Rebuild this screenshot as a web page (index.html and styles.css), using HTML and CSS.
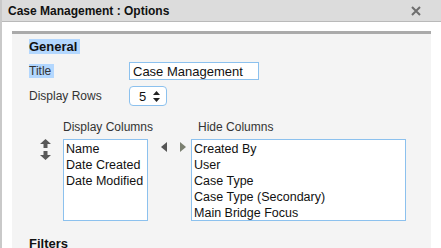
FILE: index.html
```html
<!DOCTYPE html>
<html lang="en">
<head>
    <meta charset="UTF-8">
    <title>Case Management : Options</title>
    <link rel="stylesheet" href="styles.css">
</head>
<body>
    <div class="dialog">
        <div class="titlebar">
            <span class="title">Case Management : Options</span>
            <svg class="close" width="10" height="10" viewBox="0 0 10 10"><path d="M1 1 L9 9 M9 1 L1 9" stroke="#6e6e6e" stroke-width="2"/></svg>
        </div>
        <div class="body">
            <div class="panel">
                <h2 class="section"><span class="sel">General</span></h2>

                <div class="row">
                    <label class="lbl"><span class="sel">Title</span></label>
                    <input class="text" type="text" value="Case Management">
                </div>
                <div class="row">
                    <label class="lbl">Display Rows</label>
                    <div class="spin">
                        <span>5</span>
                        <svg width="7" height="11" viewBox="0 0 7 11"><path d="M3.5 0 L7 4 L0 4 Z M0 7 L7 7 L3.5 11 Z" fill="#222"/></svg>
                    </div>
                </div>

                <div class="columns">
                    <div class="movers">
                        <svg width="11" height="9" viewBox="0 0 11 9"><path d="M5.5 0 L11 5 L7.5 5 L7.5 9 L3.5 9 L3.5 5 L0 5 Z" fill="#585858"/></svg>
                        <svg width="11" height="9" viewBox="0 0 11 9"><path d="M3.5 0 L7.5 0 L7.5 4 L11 4 L5.5 9 L0 4 L3.5 4 Z" fill="#585858"/></svg>
                    </div>
                    <div class="col">
                        <div class="col-label">Display Columns</div>
                        <div class="list list-show">
                            <div>Name</div>
                            <div>Date Created</div>
                            <div>Date Modified</div>
                        </div>
                    </div>
                    <div class="swap">
                        <svg width="6" height="10" viewBox="0 0 6 10"><path d="M6 0 L6 10 L0 5 Z" fill="#555"/></svg>
                        <svg width="6" height="10" viewBox="0 0 6 10"><path d="M0 0 L0 10 L6 5 Z" fill="#7a7f70"/></svg>
                    </div>
                    <div class="col">
                        <div class="col-label hide-label">Hide Columns</div>
                        <div class="list list-hide">
                            <div>Created By</div>
                            <div>User</div>
                            <div>Case Type</div>
                            <div>Case Type (Secondary)</div>
                            <div>Main Bridge Focus</div>
                        </div>
                    </div>
                </div>

                <h2 class="section filters">Filters</h2>
            </div>
        </div>
    </div>
</body>
</html>
```

FILE: styles.css
```css
body {
    margin: 0;
    font-family: "Liberation Sans", Arial, sans-serif;
    font-size: 12px;
    color: #222;
    background: #fff;
    overflow: hidden;
}
.dialog {
    border-left: 2px solid #c9c9c9;
    height: 248px;
    overflow: hidden;
}
.titlebar {
    display: flex;
    justify-content: space-between;
    align-items: center;
    height: 21px;
    padding: 0 20px 0 6px;
    background: #dcdcdc;
    border-bottom: 1px solid #b9b9b9;
}
.title {
    font-weight: bold;
    font-size: 12px;
    color: #111;
}
.body {
    padding: 9px 0 0 10px;
}
.panel {
    width: 419px;
    height: 220px;
    border-top: 3px solid #aaa;
    background: #f4f4f4;
    padding: 4px 0 0 17px;
    box-sizing: border-box;
}
.section {
    margin: 0 0 7px;
    font-size: 13px;
    font-weight: bold;
    color: #111;
    line-height: 17px;
}
.sel {
    background: #b3d7fe;
    padding-right: 3px;
}
.row {
    display: flex;
    align-items: center;
    margin-bottom: 6px;
}
.lbl {
    width: 100px;
    color: #333;
}
.text {
    width: 130px;
    height: 18px;
    box-sizing: border-box;
    border: 1px solid #8cc1ee;
    font-family: inherit;
    font-size: 13px;
    padding: 0 3px;
    margin: 0;
    color: #111;
}
.spin {
    display: flex;
    align-items: center;
    justify-content: space-between;
    width: 38px;
    height: 20px;
    box-sizing: border-box;
    border: 1px solid #8cc1ee;
    border-radius: 4px;
    background: #fff;
    padding: 0 6px 0 9px;
    font-size: 13px;
    color: #111;
}
.columns {
    display: flex;
    align-items: flex-start;
    margin-top: 14px;
}
.movers {
    display: flex;
    flex-direction: column;
    gap: 3px;
    margin: 19px 12px 0 11px;
}
.movers svg {
    display: block;
}
.swap {
    display: flex;
    gap: 13px;
    margin: 22px 5px 0 8px;
}
.col-label {
    text-align: center;
    color: #333;
    line-height: 14px;
    margin-bottom: 5px;
}
.hide-label {
    text-align: left;
    padding-left: 7px;
}
.list {
    height: 82px;
    box-sizing: border-box;
    border: 1px solid #8cc1ee;
    background: #fff;
    padding: 1px 2px;
    font-size: 12.5px;
    line-height: 16px;
    color: #111;
    white-space: nowrap;
}
.list-show {
    width: 85px;
}
.list-hide {
    width: 215px;
}
.filters {
    margin-top: 14px;
}
```
